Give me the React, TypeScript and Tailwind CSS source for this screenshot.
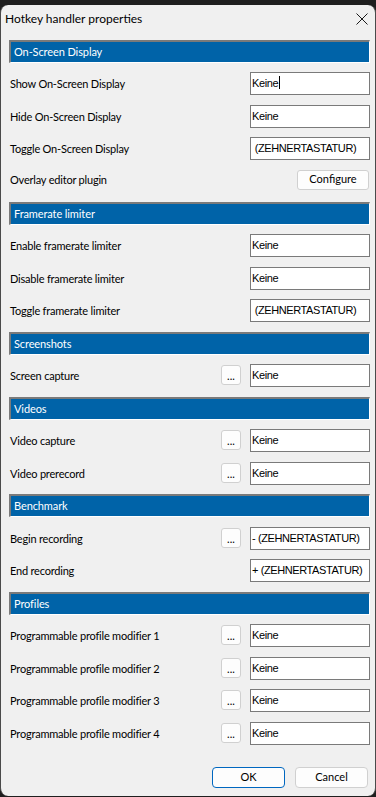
import React from "react";

const labelFont = { fontFamily: 'Lato, "Noto Sans", sans-serif' };

function Header({ title, mt }: { title: string; mt: string }) {
  return (
    <div
      className={`${mt} h-[23px] w-[361px] flex items-center bg-[#0063a8] border-t-2 border-l-2 border-t-[#7a7a7a] border-l-[#7a7a7a] border-b border-r border-b-white border-r-white pl-[3px] text-[11px] tracking-[-0.1px] text-white`}
    >
      {title}
    </div>
  );
}

function Field({ value, cursor }: { value: string; cursor?: boolean }) {
  return (
    <div
      className="h-[23px] w-[120px] bg-white border border-[#7a7a7a] pl-[1px] pt-[3px] text-[11px] leading-[14px] text-black tracking-[-0.4px] whitespace-pre overflow-hidden"
      style={{ fontFamily: '"Liberation Sans", Arial, sans-serif' }}
    >
      {value}
      {cursor && <span className="inline-block w-[1px] h-[13px] bg-black align-[-2px] ml-[1px]" />}
    </div>
  );
}

function Dots() {
  return (
    <div className="mt-[1px] mr-[9px] h-[20px] w-[20px] self-start rounded-[3px] border border-[#d0d0d0] bg-[#fdfdfd] flex items-end justify-center pb-[3px] text-[11px] leading-[10px] text-black">
      ...
    </div>
  );
}

function Row({
  label,
  value,
  mt,
  dots,
  cursor,
}: {
  label: string;
  value: string;
  mt: string;
  dots?: boolean;
  cursor?: boolean;
}) {
  return (
    <div className={`${mt} h-[23px] w-[361px] flex items-center`}>
      <div className="flex-1 pl-[1px] pt-[1px] text-[11px] tracking-[-0.2px] text-black">{label}</div>
      {dots && <Dots />}
      <Field value={value} cursor={cursor} />
    </div>
  );
}

export default function App() {
  return (
    <div className="w-[376px] h-[797px] bg-[#1f1f1f] pt-[5px] pb-[1px] overflow-hidden" style={labelFont}>
      <div className="h-[791px] rounded-[8px] bg-[#f0f0f0] border-x border-[#4a4a4a] flex flex-col">
        <div className="h-[28px] flex items-center justify-between pl-[4px] pr-[6px] text-[12px] text-black">
          <span>Hotkey handler properties</span>
          <svg width="12" height="12" viewBox="0 0 12 12" className="mr-[1px]">
            <path d="M0.5 0.5 L11.5 11.5 M11.5 0.5 L0.5 11.5" stroke="#1a1a1a" strokeWidth="1" fill="none" />
          </svg>
        </div>
        <div className="ml-[8px] flex flex-col">
          <Header title="On-Screen Display" mt="mt-[7px]" />
          <Row label="Show On-Screen Display" value="Keine" mt="mt-[9px]" cursor />
          <Row label="Hide On-Screen Display" value="Keine" mt="mt-[10px]" />
          <Row label="Toggle On-Screen Display" value=" (ZEHNERTASTATUR)" mt="mt-[9px]" />
          <div className="mt-[8px] h-[23px] w-[361px] flex items-center">
            <div className="flex-1 pl-[1px] pt-[1px] text-[11px] tracking-[-0.2px] text-black">Overlay editor plugin</div>
            <div className="mr-[1px] h-[20px] w-[72px] rounded-[3px] border border-[#d0d0d0] bg-[#fdfdfd] flex items-center justify-center text-[11px] text-black">
              Configure
            </div>
          </div>
          <Header title="Framerate limiter" mt="mt-[11px]" />
          <Row label="Enable framerate limiter" value="Keine" mt="mt-[9px]" />
          <Row label="Disable framerate limiter" value="Keine" mt="mt-[10px]" />
          <Row label="Toggle framerate limiter" value=" (ZEHNERTASTATUR)" mt="mt-[9px]" />
          <Header title="Screenshots" mt="mt-[10px]" />
          <Row label="Screen capture" value="Keine" mt="mt-[9px]" dots />
          <Header title="Videos" mt="mt-[10px]" />
          <Row label="Video capture" value="Keine" mt="mt-[9px]" dots />
          <Row label="Video prerecord" value="Keine" mt="mt-[10px]" dots />
          <Header title="Benchmark" mt="mt-[9px]" />
          <Row label="Begin recording" value="- (ZEHNERTASTATUR)" mt="mt-[10px]" dots />
          <Row label="End recording" value="+ (ZEHNERTASTATUR)" mt="mt-[9px]" />
          <Header title="Profiles" mt="mt-[10px]" />
          <Row label="Programmable profile modifier 1" value="Keine" mt="mt-[9px]" dots />
          <Row label="Programmable profile modifier 2" value="Keine" mt="mt-[10px]" dots />
          <Row label="Programmable profile modifier 3" value="Keine" mt="mt-[9px]" dots />
          <Row label="Programmable profile modifier 4" value="Keine" mt="mt-[10px]" dots />
          <div className="mt-[22px] w-[361px] flex justify-end gap-[10px] pr-[2px]">
            <div className="h-[21px] w-[73px] rounded-[4px] border border-[#0067c0] bg-[#fdfdfd] flex items-center justify-center text-[11px] text-black">
              OK
            </div>
            <div className="h-[21px] w-[73px] rounded-[4px] border border-[#d0d0d0] bg-[#fdfdfd] flex items-center justify-center text-[11px] text-black">
              Cancel
            </div>
          </div>
        </div>
      </div>
    </div>
  );
}
